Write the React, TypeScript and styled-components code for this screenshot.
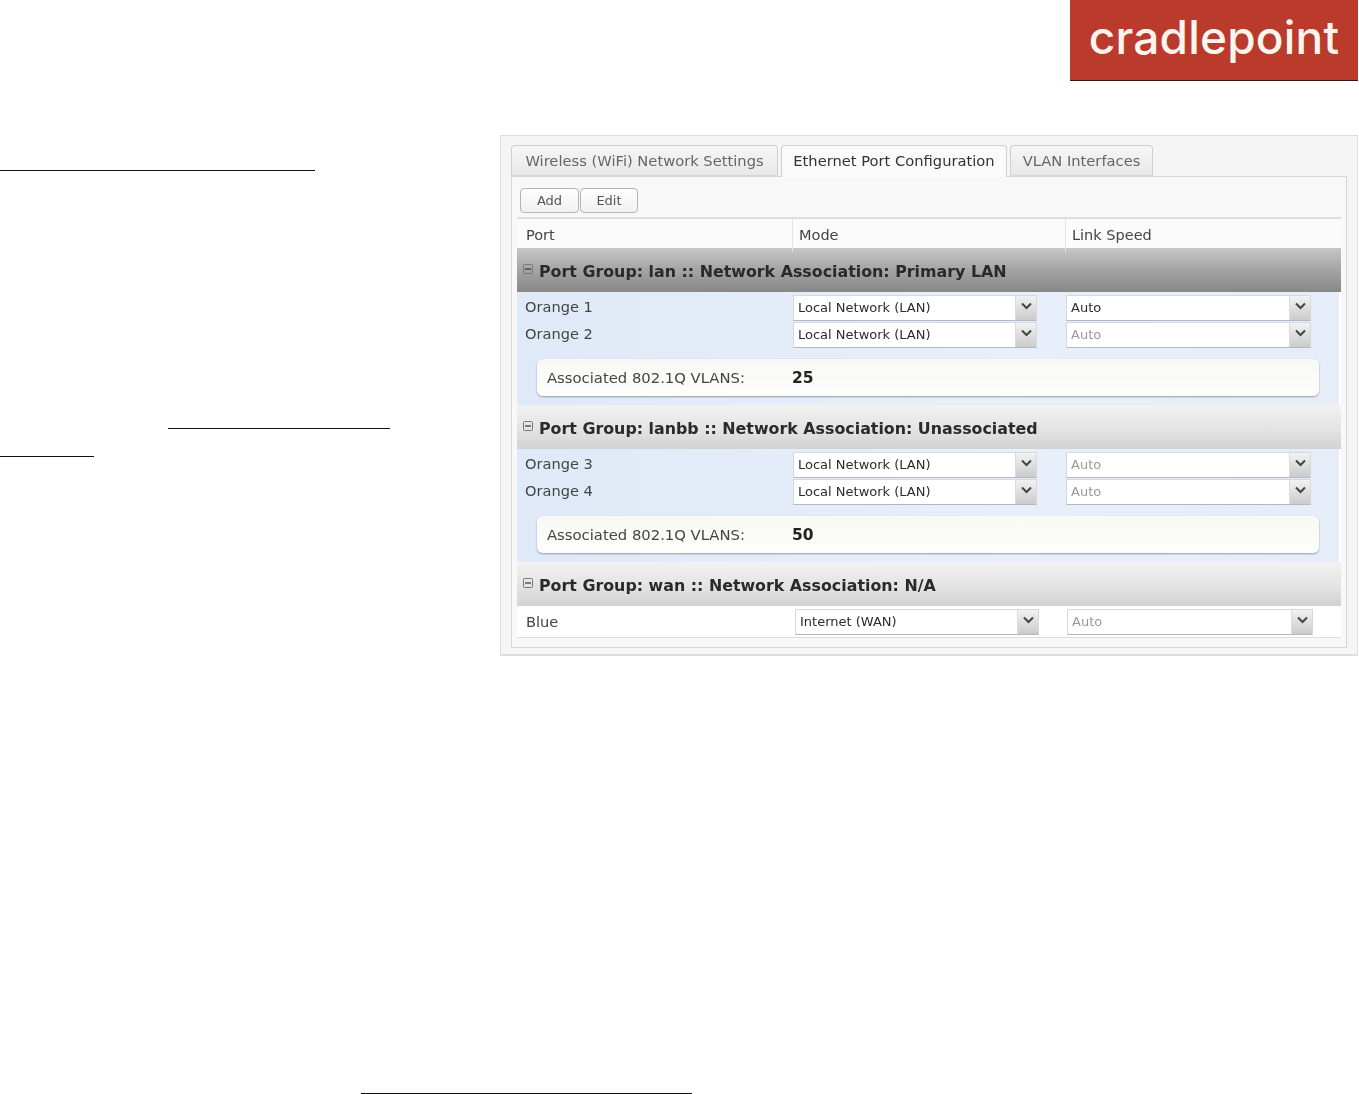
import React from 'react';
import styled, { createGlobalStyle } from 'styled-components';

const GlobalStyle = createGlobalStyle`
  html, body {
    margin: 0;
    padding: 0;
    background: #fff;
  }
  body {
    font-family: "DejaVu Sans", Verdana, sans-serif;
    color: #333;
  }
`;

const Page = styled.div`
  width: 1359px;
  height: 1094px;
  overflow: hidden;
`;

const Header = styled.header`
  display: flex;
  justify-content: flex-end;
  height: 81px;
  padding-right: 1px;
`;

const Logo = styled.div`
  display: flex;
  justify-content: center;
  width: 288px;
  height: 80px;
  background: #ba3a2c;
  border-bottom: 1px solid #3a1712;
  color: #fbf5ee;
  font-family: "Inter", sans-serif;
  font-size: 46px;
  font-weight: 500;
  line-height: 74px;
  letter-spacing: 0.2px;
`;

const Main = styled.main`
  display: flex;
  margin-top: 54px;
`;

const Notes = styled.aside`
  width: 500px;
  flex: none;
`;

const LinkRule = styled.div<{ $width: number; $indent?: number; $top: number }>`
  width: ${(p) => p.$width}px;
  height: 1px;
  margin-top: ${(p) => p.$top}px;
  margin-left: ${(p) => p.$indent ?? 0}px;
  background: #111;
`;

const Panel = styled.section`
  width: 858px;
  height: 521px;
  box-sizing: border-box;
  padding: 9px 10px 8px 10px;
  background: #f5f5f5;
  border: 1px solid #dedede;
  border-bottom-width: 2px;
  filter: blur(0.35px);
`;

const Tabs = styled.div`
  display: flex;
  gap: 3px;
  height: 31px;
`;

const Tab = styled.div<{ $active?: boolean; $width: number }>`
  box-sizing: border-box;
  width: ${(p) => p.$width}px;
  height: ${(p) => (p.$active ? 32 : 31)}px;
  position: relative;
  z-index: ${(p) => (p.$active ? 1 : 0)};
  border: 1px solid #cfcfcf;
  border-bottom: ${(p) => (p.$active ? 'none' : '1px solid #d8d8d8')};
  border-radius: 4px 4px 0 0;
  background: ${(p) => (p.$active ? '#fafafa' : 'linear-gradient(#f6f6f6, #e8e8e8)')};
  color: ${(p) => (p.$active ? '#333' : '#666')};
  font-size: 14.7px;
  line-height: 29px;
  text-align: center;
  white-space: nowrap;
`;

const Content = styled.div`
  height: 472px;
  box-sizing: border-box;
  padding: 11px 7px 0 5px;
  background: #f8f8f8;
  border: 1px solid #d6d6d6;
`;

const Toolbar = styled.div`
  display: flex;
  gap: 1px;
  margin-left: 3px;
  height: 29px;
`;

const ToolButton = styled.button<{ $width: number }>`
  width: ${(p) => p.$width}px;
  height: 25px;
  padding: 0;
  background: linear-gradient(#fdfdfd, #f1f1f1);
  border: 1px solid #b4b4b4;
  border-radius: 4px;
  color: #555;
  font-family: inherit;
  font-size: 13px;
`;

const Table = styled.div`
  width: 824px;
  border-top: 2px solid #dedede;
  border-bottom: 1px solid #dedede;
  background: #fff;
`;

const HeadRow = styled.div`
  display: grid;
  grid-template-columns: 275px 273px 1fr;
  height: 29px;
  background: #fbfbfb;
`;

const HeadCell = styled.div`
  padding-left: 6px;
  border-left: 1px solid #e4e4e4;
  color: #444;
  font-size: 14.5px;
  line-height: 33px;
  &:first-child {
    border-left: none;
    padding-left: 9px;
  }
`;

const GroupHeader = styled.div<{ $dark?: boolean }>`
  display: flex;
  align-items: center;
  gap: 6px;
  height: 44px;
  box-sizing: border-box;
  padding-left: 6px;
  background: ${(p) =>
    p.$dark
      ? 'linear-gradient(#c6c6c6, #a4a4a4 50%, #878787)'
      : 'linear-gradient(#f2f2f2, #e2e2e2 60%, #d2d2d2)'};
`;

const GroupIcon = styled.svg`
  width: 10px;
  height: 10px;
  flex: none;
  margin-top: -2px;
`;

const GroupTitle = styled.span`
  padding-top: 2px;
  color: #2a2a2a;
  font-size: 15.85px;
  font-weight: 700;
`;

const GroupBody = styled.div`
  padding: 3px 2px 9px 0;
  margin-right: 2px;
  background: linear-gradient(90deg, #dfe9f7, #e8effa 60%, #e6edf9);
`;

const PortRow = styled.div<{ $plain?: boolean }>`
  display: grid;
  grid-template-columns: 276px ${(p) => (p.$plain ? 272 : 273)}px 1fr;
  height: ${(p) => (p.$plain ? 31 : 26)}px;
  margin-bottom: ${(p) => (p.$plain ? 0 : 1)}px;
  align-items: ${(p) => (p.$plain ? 'center' : 'start')};
  padding-left: ${(p) => (p.$plain ? 2 : 0)}px;
`;

const PortName = styled.div<{ $plain?: boolean }>`
  padding-left: ${(p) => (p.$plain ? 7 : 8)}px;
  color: #444;
  font-size: 14.6px;
  line-height: ${(p) => (p.$plain ? 30 : 24)}px;
`;

const Select = styled.div<{ $disabled?: boolean; $width: number }>`
  display: flex;
  width: ${(p) => p.$width}px;
  height: 26px;
  box-sizing: border-box;
  background: #fff;
  border: 1px solid #d4d8e0;
  border-bottom-color: #b4b8c0;
  color: ${(p) => (p.$disabled ? '#9a9a9a' : '#2c2c2c')};
  font-size: 13px;
  line-height: 24px;
`;

const SelectText = styled.span`
  flex: 1;
  padding-left: 4px;
`;

const SelectArrow = styled.span`
  display: flex;
  align-items: flex-start;
  justify-content: center;
  width: 21px;
  padding-top: 6px;
  box-sizing: border-box;
  background: linear-gradient(#f2f2f2, #cbcbcb);
  border-left: 1px solid #dcdcdc;
`;

const VlanBox = styled.div`
  display: flex;
  width: 782px;
  height: 37px;
  box-sizing: border-box;
  margin: 11px 0 0 20px;
  padding-left: 10px;
  align-items: center;
  background: linear-gradient(#f8f8f4, #fdfdfb);
  border-radius: 6px;
  box-shadow: 0 1px 2px rgba(0, 0, 0, 0.35);
  color: #444;
  font-size: 14.8px;
`;

const VlanLabel = styled.span`
  width: 245px;
`;

const VlanValue = styled.b`
  color: #222;
  font-size: 15.5px;
`;

const Chevron = () => (
  <svg width="11" height="8" viewBox="0 0 11 8">
    <path d="M1 1.5 L5.5 6 L10 1.5" fill="none" stroke="#444" strokeWidth="2" />
  </svg>
);

const Collapse = () => (
  <GroupIcon viewBox="0 0 10 10">
    <rect x="0.5" y="0.5" width="9" height="9" rx="1" fill="none" stroke="#777" />
    <path d="M2 5 H8" stroke="#333" strokeWidth="1.2" />
  </GroupIcon>
);

const Dropdown: React.FC<{ label: string; disabled?: boolean; width?: number }> = ({
  label,
  disabled,
  width = 244,
}) => (
  <Select $disabled={disabled} $width={width}>
    <SelectText>{label}</SelectText>
    <SelectArrow>
      <Chevron />
    </SelectArrow>
  </Select>
);

const groups = [
  {
    title: 'Port Group: lan :: Network Association: Primary LAN',
    dark: true,
    vlan: '25',
    ports: [
      { name: 'Orange 1', speedDisabled: false },
      { name: 'Orange 2', speedDisabled: true },
    ],
  },
  {
    title: 'Port Group: lanbb :: Network Association: Unassociated',
    dark: false,
    vlan: '50',
    ports: [
      { name: 'Orange 3', speedDisabled: true },
      { name: 'Orange 4', speedDisabled: true },
    ],
  },
];

const App: React.FC = () => (
  <Page>
    <GlobalStyle />
    <Header>
      <Logo>cradlepoint</Logo>
    </Header>
    <Main>
      <Notes>
        <LinkRule $width={315} $top={35} />
        <LinkRule $width={222} $indent={168} $top={257} />
        <LinkRule $width={94} $top={27} />
      </Notes>
      <Panel>
        <Tabs>
          <Tab $width={267}>Wireless (WiFi) Network Settings</Tab>
          <Tab $active $width={226}>Ethernet Port Configuration</Tab>
          <Tab $width={143}>VLAN Interfaces</Tab>
        </Tabs>
        <Content>
          <Toolbar>
            <ToolButton $width={59}>Add</ToolButton>
            <ToolButton $width={58}>Edit</ToolButton>
          </Toolbar>
          <Table>
            <HeadRow>
              <HeadCell>Port</HeadCell>
              <HeadCell>Mode</HeadCell>
              <HeadCell>Link Speed</HeadCell>
            </HeadRow>
            {groups.map((group) => (
              <React.Fragment key={group.title}>
                <GroupHeader $dark={group.dark}>
                  <Collapse />
                  <GroupTitle>{group.title}</GroupTitle>
                </GroupHeader>
                <GroupBody>
                  {group.ports.map((port) => (
                    <PortRow key={port.name}>
                      <PortName>{port.name}</PortName>
                      <Dropdown label="Local Network (LAN)" />
                      <Dropdown label="Auto" width={245} disabled={port.speedDisabled} />
                    </PortRow>
                  ))}
                  <VlanBox>
                    <VlanLabel>Associated 802.1Q VLANS:</VlanLabel>
                    <VlanValue>{group.vlan}</VlanValue>
                  </VlanBox>
                </GroupBody>
              </React.Fragment>
            ))}
            <GroupHeader>
              <Collapse />
              <GroupTitle>Port Group: wan :: Network Association: N/A</GroupTitle>
            </GroupHeader>
            <PortRow $plain>
              <PortName $plain>Blue</PortName>
              <Dropdown label="Internet (WAN)" />
              <Dropdown label="Auto" width={246} disabled />
            </PortRow>
          </Table>
        </Content>
      </Panel>
    </Main>
    <LinkRule $width={331} $indent={361} $top={437} />
  </Page>
);

export default App;
